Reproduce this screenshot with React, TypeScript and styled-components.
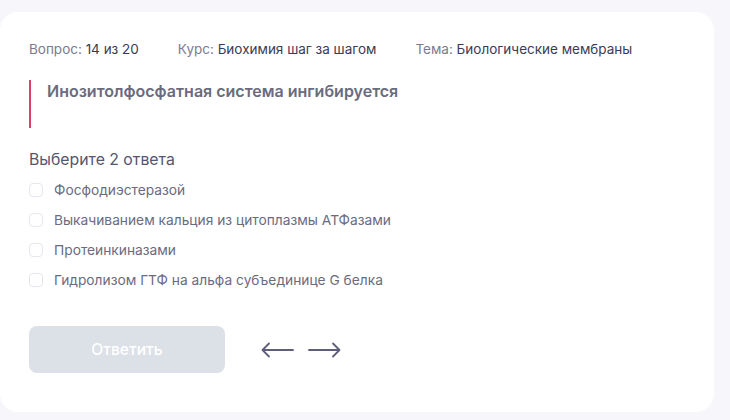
import React from "react";
import styled, { createGlobalStyle } from "styled-components";

const Global = createGlobalStyle`
  html, body { margin: 0; padding: 0; background: #f6f6fb; }
  body { font-family: Inter, "Noto Sans", sans-serif; }
`;

const Page = styled.div`
  width: 730px;
  height: 420px;
  padding: 12px 16px 8px 0;
  box-sizing: border-box;
  background: #f6f6fb;
`;

const Card = styled.div`
  width: 714px;
  height: 400px;
  background: #ffffff;
  border-radius: 18px;
  box-sizing: border-box;
  padding: 29px 29px 0 29px;
  display: flex;
  flex-direction: column;
`;

const Meta = styled.div`
  display: flex;
  gap: 39px;
  font-size: 13.5px;
  line-height: 16px;
`;

const MetaItem = styled.span`
  color: #7b7b8e;
`;

const MetaValue = styled.span`
  color: #3b3b55;
`;

const Question = styled.div`
  margin-top: 23px;
  border-left: 2px solid #e0406a;
  height: 48px;
  padding: 2px 0 0 16px;
  box-sizing: border-box;
  font-size: 16px;
  font-weight: 600;
  color: #6b6b7e;
  line-height: 19px;
`;

const Hint = styled.div`
  margin-top: 22px;
  font-size: 15.8px;
  color: #55556d;
  line-height: 19px;
`;

const Options = styled.div`
  margin-top: 6px;
  display: flex;
  flex-direction: column;
`;

const Option = styled.label`
  display: flex;
  align-items: center;
  height: 30px;
  gap: 11px;
  font-size: 13.75px;
  color: #6b6b80;
`;

const Box = styled.span`
  width: 14px;
  height: 14px;
  border: 1px solid #e6e6ee;
  border-radius: 4px;
  box-sizing: border-box;
  background: #fff;
`;

const Actions = styled.div`
  margin-top: 31px;
  display: flex;
  align-items: center;
`;

const Button = styled.button`
  width: 196px;
  height: 47px;
  border: none;
  border-radius: 8px;
  background: #dce0e7;
  color: #ffffff;
  font-family: Inter, "Noto Sans", sans-serif;
  font-size: 15.6px;
  font-weight: 500;
`;

const Arrows = styled.div`
  margin-left: 36px;
  display: flex;
  gap: 14px;
`;

const ArrowBtn = styled.span`
  display: flex;
  width: 33px;
  height: 20px;
  color: #5e5e7a;
`;

const Arrow = ({ dir }: { dir: "left" | "right" }) => (
  <ArrowBtn>
    <svg width="33" height="20" viewBox="0 0 33 20" fill="none" stroke="currentColor" strokeWidth="1.8" strokeLinecap="round" strokeLinejoin="round">
      {dir === "left" ? (
        <>
          <path d="M2 10 H32" />
          <path d="M8 3.5 L1.5 10 L8 16.5" />
        </>
      ) : (
        <>
          <path d="M1 10 H31" />
          <path d="M25 3.5 L31.5 10 L25 16.5" />
        </>
      )}
    </svg>
  </ArrowBtn>
);

const options = [
  "Фосфодиэстеразой",
  "Выкачиванием кальция из цитоплазмы АТФазами",
  "Протеинкиназами",
  "Гидролизом ГТФ на альфа субъединице G белка",
];

export default function App() {
  return (
    <>
      <Global />
      <Page>
        <Card>
          <Meta>
            <MetaItem>
              Вопрос: <MetaValue>14 из 20</MetaValue>
            </MetaItem>
            <MetaItem>
              Курс: <MetaValue>Биохимия шаг за шагом</MetaValue>
            </MetaItem>
            <MetaItem>
              Тема: <MetaValue>Биологические мембраны</MetaValue>
            </MetaItem>
          </Meta>
          <Question>Инозитолфосфатная система ингибируется</Question>
          <Hint>Выберите 2 ответа</Hint>
          <Options>
            {options.map((o) => (
              <Option key={o}>
                <Box />
                {o}
              </Option>
            ))}
          </Options>
          <Actions>
            <Button>Ответить</Button>
            <Arrows>
              <Arrow dir="left" />
              <Arrow dir="right" />
            </Arrows>
          </Actions>
        </Card>
      </Page>
    </>
  );
}
